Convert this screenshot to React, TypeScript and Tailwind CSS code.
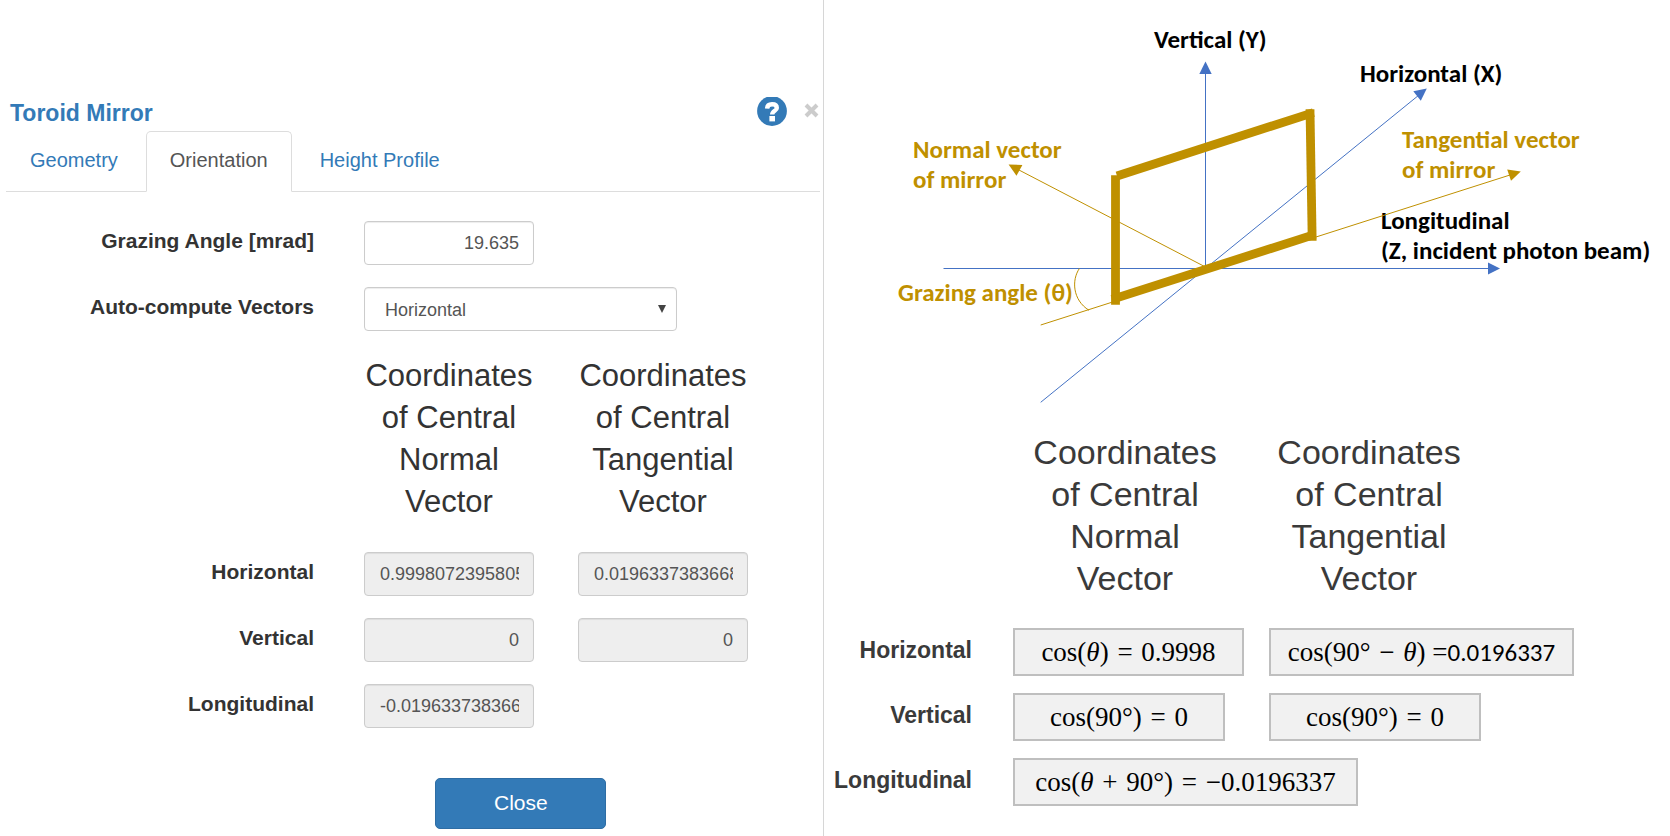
import React, { useState } from "react";

const fieldClass =
  "h-11 w-full rounded-[4px] border border-[#ccc] pl-[15px] pr-[14px] text-right text-[18px] text-[#555] shadow-[inset_0_1px_1px_rgba(0,0,0,0.075)] outline-none";

const labelClass = "pt-[6px] pr-[6px] text-right text-[21px] leading-7 font-bold text-[#333]";

const rowClass =
  "grid grid-cols-[minmax(0,320fr)_minmax(0,170fr)_minmax(0,170fr)_minmax(0,31fr)] gap-x-11";

function ReadOnlyField({ id, label, value }: { id: string; label?: string; value: string }) {
  return (
    <input
      id={id}
      aria-label={label}
      readOnly
      defaultValue={value}
      className={`${fieldClass} bg-[#eee] ${value.length > 12 ? "text-left" : "text-right"}`}
    />
  );
}

function ColumnTitle({ kind }: { kind: string }) {
  return (
    <>
      Coordinates
      <br />
      of Central
      <br />
      {kind}
      <br />
      Vector
    </>
  );
}

function HelpIcon() {
  return (
    <svg viewBox="0 1 30 29" className="h-[29px] w-[30px]" aria-hidden="true">
      <circle cx="15" cy="15" r="14.9" fill="#337ab7" />
      <path
        d="M10.1 12.6C10.3 9.4 12 8.3 15 8.3C18 8.3 19.8 9.6 19.8 11.9C19.8 14.9 15.2 14.7 15.2 18.6"
        fill="none"
        stroke="#fff"
        strokeWidth="4.4"
      />
      <rect x="12.4" y="20" width="5.6" height="5.4" fill="#fff" />
    </svg>
  );
}

function CloseIcon() {
  return (
    <svg viewBox="0 0 15 29" className="h-[29px] w-[15px]" aria-hidden="true">
      <path d="M2 8L13 19M13 8L2 19" stroke="#ccc" strokeWidth="4" />
    </svg>
  );
}

const tabs = ["Geometry", "Orientation", "Height Profile"];

function MirrorEditor() {
  const [active, setActive] = useState("Orientation");
  return (
    <section className="border-r border-[#d6d6d6] pt-[97px]">
      <header className="flex items-start pr-1 pl-[10px]">
        <h1 className="mr-auto text-[23px] leading-8 font-bold text-[#337ab7]">Toroid Mirror</h1>
        <button type="button" aria-label="Help" className="mr-[17px]">
          <HelpIcon />
        </button>
        <button type="button" aria-label="Dismiss">
          <CloseIcon />
        </button>
      </header>

      <nav className="mt-[2px] mr-[3px] ml-[6px] flex gap-1 border-b border-[#ddd]">
        {tabs.map((tab) => (
          <button
            key={tab}
            type="button"
            onClick={() => setActive(tab)}
            className={`-mb-px rounded-t-[5px] border px-[23px] pt-[14px] pb-[17px] text-[20px] leading-7 ${
              tab === active
                ? "border-[#ddd] border-b-white bg-white text-[#555]"
                : "border-transparent text-[#337ab7]"
            }`}
          >
            {tab}
          </button>
        ))}
      </nav>

      <form className="flex flex-col gap-[22px] pt-[29px]">
        <div className={rowClass}>
          <label htmlFor="grazing" className={labelClass}>
            Grazing Angle [mrad]
          </label>
          <input id="grazing" defaultValue="19.635" className={`${fieldClass} bg-white`} />
        </div>

        <div className={rowClass}>
          <label htmlFor="auto" className={labelClass}>
            Auto-compute Vectors
          </label>
          <div className="relative col-span-3 w-[313px]">
            <select
              id="auto"
              defaultValue="Horizontal"
              className="h-11 w-full appearance-none rounded-[4px] border border-[#ccc] bg-white px-5 pt-[2px] text-[18px] text-[#555] shadow-[inset_0_1px_1px_rgba(0,0,0,0.075)] outline-none"
            >
              <option>Horizontal</option>
              <option>Vertical</option>
            </select>
            <svg
              viewBox="0 0 8 8"
              className="pointer-events-none absolute top-[18px] right-[11px] h-2 w-2"
              aria-hidden="true"
            >
              <path d="M0 0H8L4 8Z" fill="#444" />
            </svg>
          </div>
        </div>

        <div className={`${rowClass} pt-[2px] pb-[7px] text-center text-[31px] leading-[42px] text-[#333]`}>
          <div className="col-start-2">
            <ColumnTitle kind="Normal" />
          </div>
          <div>
            <ColumnTitle kind="Tangential" />
          </div>
        </div>

        <div className={rowClass}>
          <label htmlFor="nx" className={labelClass}>
            Horizontal
          </label>
          <ReadOnlyField id="nx" value="0.9998072395805" />
          <ReadOnlyField id="tx" label="Tangential horizontal" value="0.0196337383668" />
        </div>
        <div className={rowClass}>
          <label htmlFor="ny" className={labelClass}>
            Vertical
          </label>
          <ReadOnlyField id="ny" value="0" />
          <ReadOnlyField id="ty" label="Tangential vertical" value="0" />
        </div>
        <div className={rowClass}>
          <label htmlFor="nz" className={labelClass}>
            Longitudinal
          </label>
          <ReadOnlyField id="nz" value="-0.019633738366" />
        </div>

        <button
          type="button"
          className="mt-[28px] mb-[6px] ml-[52.9%] h-[51px] w-[171px] rounded-[5px] border border-[#2e6da4] bg-[#337ab7] pb-[2px] text-[21px] text-white"
        >
          Close
        </button>
      </form>
    </section>
  );
}

function Diagram() {
  return (
    <svg
      viewBox="824 0 846 430"
      className="block w-full font-['Carlito','Calibri','Lato',sans-serif] text-[25px] font-bold"
      role="img"
      aria-label="Mirror orientation"
    >
      <g fill="#000">
        <text x="1154" y="48">Vertical (Y)</text>
        <text x="1360" y="82">Horizontal (X)</text>
        <text x="1381" y="229">Longitudinal</text>
        <text x="1381" y="259">(Z, incident photon beam)</text>
      </g>
      <g fill="#bf9000">
        <text x="913" y="158">Normal vector</text>
        <text x="913" y="188">of mirror</text>
        <text x="1402" y="148">Tangential vector</text>
        <text x="1402" y="178">of mirror</text>
        <text x="898" y="301">Grazing angle (θ)</text>
      </g>
      <g stroke="#4472c4" strokeWidth="1">
        <path d="M1205.5 70V269" />
        <path d="M943.5 268.5H1490" />
        <path d="M1040.7 402.3L1418 95.8" />
      </g>
      <g fill="#4472c4">
        <path d="M1205.5 61.5L1211.7 74H1199.3Z" />
        <path d="M1500 268.5L1488 262.4V274.6Z" />
        <path d="M1426.8 88.6L1413.3 91.3L1420.8 100.8Z" />
      </g>
      <g stroke="#bf9000" fill="none">
        <path d="M1205.5 267L1018 169.5" />
        <path d="M1040.7 325L1510 175" />
        <path d="M1079.4 268.5C1071.5 280 1072.5 300 1089 310.3" />
      </g>
      <g fill="#bf9000">
        <path d="M1008.6 164.6L1022.4 165L1016.5 175.8Z" />
        <path d="M1520.8 171.6L1507.2 169.6L1511 180.8Z" />
      </g>
      <g stroke="#bf9000" strokeWidth="8.8" fill="none">
        <path d="M1115.5 175.3V304.7" />
        <path d="M1112 299.4L1315 234.4" />
        <path d="M1310 109.3L1312.2 240.8" />
        <path d="M1117 176L1313.4 112.6" />
      </g>
    </svg>
  );
}

const Theta = () => <i>θ</i>;
const Op = ({ children }: { children: string }) => <span className="mx-[2px]"> {children} </span>;

const boxClass =
  "flex h-12 items-center justify-center border-2 border-[#bfbfbf] bg-[#f1f1f1] font-['Liberation_Serif',serif] text-[27px] whitespace-pre text-black";

const rowHeadClass = "pt-[10px] pr-[41px] text-right align-top text-[23px] leading-6 font-bold";

function FormulaTable() {
  return (
    <table className="w-full table-fixed border-collapse text-[#3a3a3a]">
      <colgroup>
        <col className="w-[189px]" />
        <col className="w-[256px]" />
        <col />
      </colgroup>
      <thead>
        <tr className="text-center text-[34px] leading-[42px]">
          <td />
          <th scope="col" className="pt-px pb-[29px] font-normal">
            <div className="w-[224px]">
              <ColumnTitle kind="Normal" />
            </div>
          </th>
          <th scope="col" className="pt-px pb-[29px] font-normal">
            <div className="w-[200px]">
              <ColumnTitle kind="Tangential" />
            </div>
          </th>
        </tr>
      </thead>
      <tbody>
        <tr>
          <th scope="row" className={rowHeadClass}>Horizontal</th>
          <td className="pb-[17px]">
            <div className={`${boxClass} w-[231px]`}>
              <span>cos(<Theta />)<Op>=</Op>0.9998</span>
            </div>
          </td>
          <td className="pb-[17px]">
            <div className={`${boxClass} w-[305px]`}>
              <span>
                cos(90°<Op>−</Op><Theta />) =
                <span className="font-['Carlito','Calibri','Lato',sans-serif] text-[25px] leading-6">0.0196337</span>
              </span>
            </div>
          </td>
        </tr>
        <tr>
          <th scope="row" className={rowHeadClass}>Vertical</th>
          <td className="pb-[17px]">
            <div className={`${boxClass} w-[212px]`}>
              <span>cos(90°)<Op>=</Op>0</span>
            </div>
          </td>
          <td className="pb-[17px]">
            <div className={`${boxClass} w-[212px]`}>
              <span>cos(90°)<Op>=</Op>0</span>
            </div>
          </td>
        </tr>
        <tr>
          <th scope="row" className={rowHeadClass}>Longitudinal</th>
          <td colSpan={2}>
            <div className={`${boxClass} w-[345px]`}>
              <span>cos(<Theta /><Op>+</Op>90°)<Op>=</Op>−0.0196337</span>
            </div>
          </td>
        </tr>
      </tbody>
    </table>
  );
}

export default function App() {
  return (
    <main className="grid min-h-screen grid-cols-[minmax(0,824fr)_minmax(0,846fr)] bg-white font-['Liberation_Sans',Arial,sans-serif]">
      <MirrorEditor />
      <section>
        <Diagram />
        <FormulaTable />
      </section>
    </main>
  );
}
